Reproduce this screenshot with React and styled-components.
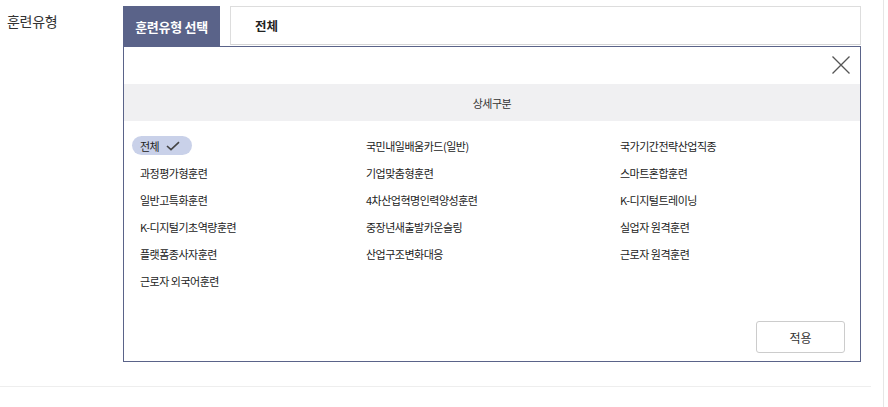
import styled, { createGlobalStyle } from 'styled-components';

const GlobalStyle = createGlobalStyle`
  html, body {
    margin: 0;
    padding: 0;
    background: #fff;
    font-family: "Noto Sans CJK KR", "Noto Sans", sans-serif;
    color: #222;
  }
`;

const items = [
  ['전체', '국민내일배움카드(일반)', '국가기간전략산업직종'],
  ['과정평가형훈련', '기업맞춤형훈련', '스마트혼합훈련'],
  ['일반고특화훈련', '4차산업혁명인력양성훈련', 'K-디지털트레이닝'],
  ['K-디지털기초역량훈련', '중장년새출발카운슬링', '실업자 원격훈련'],
  ['플랫폼종사자훈련', '산업구조변화대응', '근로자 원격훈련'],
  ['근로자 외국어훈련', '', ''],
];

const Page = styled.div`
  width: 884px;
  height: 407px;
  border-right: 1px solid #e6e6e6;
  box-sizing: border-box;
`;

const Row = styled.div`
  display: flex;
  width: 871px;
  padding-top: 6px;
  height: 387px;
  box-sizing: border-box;
  border-bottom: 1px solid #eeeeee;
`;

const Label = styled.div`
  width: 123px;
  padding: 5px 0 0 7px;
  box-sizing: border-box;
  font-size: 14px;
  letter-spacing: -0.3px;
  color: #333;
`;

const Field = styled.div`
  width: 738px;
  display: flex;
  flex-direction: column;
`;

const TabBar = styled.div`
  display: flex;
  gap: 10px;
  height: 40px;
`;

const Tab = styled.div`
  width: 97px;
  background: #5a6389;
  color: #fff;
  font-size: 13px;
  font-weight: 700;
  letter-spacing: -0.3px;
  display: flex;
  align-items: center;
  justify-content: center;
`;

const Input = styled.div`
  flex: 1;
  border: 1px solid #dddddd;
  border-bottom-color: #d5d5d5;
  height: 39px;
  box-sizing: border-box;
  display: flex;
  align-items: center;
  padding-left: 24px;
  font-size: 12.5px;
  font-weight: 700;
  color: #222;
`;

const Panel = styled.div`
  position: relative;
  height: 316px;
  border: 1px solid #5a6389;
  box-sizing: border-box;
  display: flex;
  flex-direction: column;
`;

const Close = styled.button`
  position: absolute;
  top: 8px;
  right: 9px;
  width: 20px;
  height: 20px;
  padding: 0;
  border: 0;
  background: none;
  cursor: pointer;
`;

const Section = styled.div`
  margin-top: 37px;
  height: 37px;
  background: #f0f0f2;
  display: flex;
  align-items: center;
  justify-content: center;
  font-size: 11px;
  letter-spacing: -0.5px;
  color: #333;
`;

const Grid = styled.div`
  display: grid;
  grid-template-columns: 226px 254px 1fr;
  grid-auto-rows: 27px;
  padding: 11px 0 0 8px;
`;

const Item = styled.div`
  display: flex;
  align-items: center;
`;

const Chip = styled.span`
  display: inline-flex;
  align-items: center;
  gap: 7px;
  height: 19px;
  padding: 0 ${(p) => (p.$active ? '12px' : '8px')} 0 8px;
  border-radius: 10px;
  background: ${(p) => (p.$active ? '#c9d1e9' : 'transparent')};
  font-size: 11px;
  letter-spacing: -0.5px;
  color: #222;
  white-space: nowrap;
`;

const Footer = styled.div`
  margin-top: auto;
  display: flex;
  justify-content: flex-end;
  padding: 0 15px 8px 0;
`;

const Apply = styled.button`
  width: 89px;
  height: 32px;
  background: #fff;
  border: 1px solid #cccccc;
  border-radius: 3px;
  font-family: inherit;
  font-size: 12px;
  color: #333;
`;

const Check = () => (
  <svg width="14" height="10" viewBox="0 0 14 10" fill="none" stroke="#444" strokeWidth="1.6">
    <path d="M1 5 L5 8.6 L13 1.2" />
  </svg>
);

export default function App() {
  return (
    <>
      <GlobalStyle />
      <Page>
        <Row>
          <Label>훈련유형</Label>
          <Field>
            <TabBar>
              <Tab>훈련유형 선택</Tab>
              <Input>전체</Input>
            </TabBar>
            <Panel>
              <Close aria-label="닫기">
                <svg width="20" height="20" viewBox="0 0 20 20" stroke="#555" strokeWidth="1.3">
                  <path d="M1.5 1.5 L18.5 18.5 M18.5 1.5 L1.5 18.5" />
                </svg>
              </Close>
              <Section>상세구분</Section>
              <Grid>
                {items.flat().map((t, i) => (
                  <Item key={i}>
                    {t && (
                      <Chip $active={i === 0}>
                        {t}
                        {i === 0 && <Check />}
                      </Chip>
                    )}
                  </Item>
                ))}
              </Grid>
              <Footer>
                <Apply>적용</Apply>
              </Footer>
            </Panel>
          </Field>
        </Row>
      </Page>
    </>
  );
}
